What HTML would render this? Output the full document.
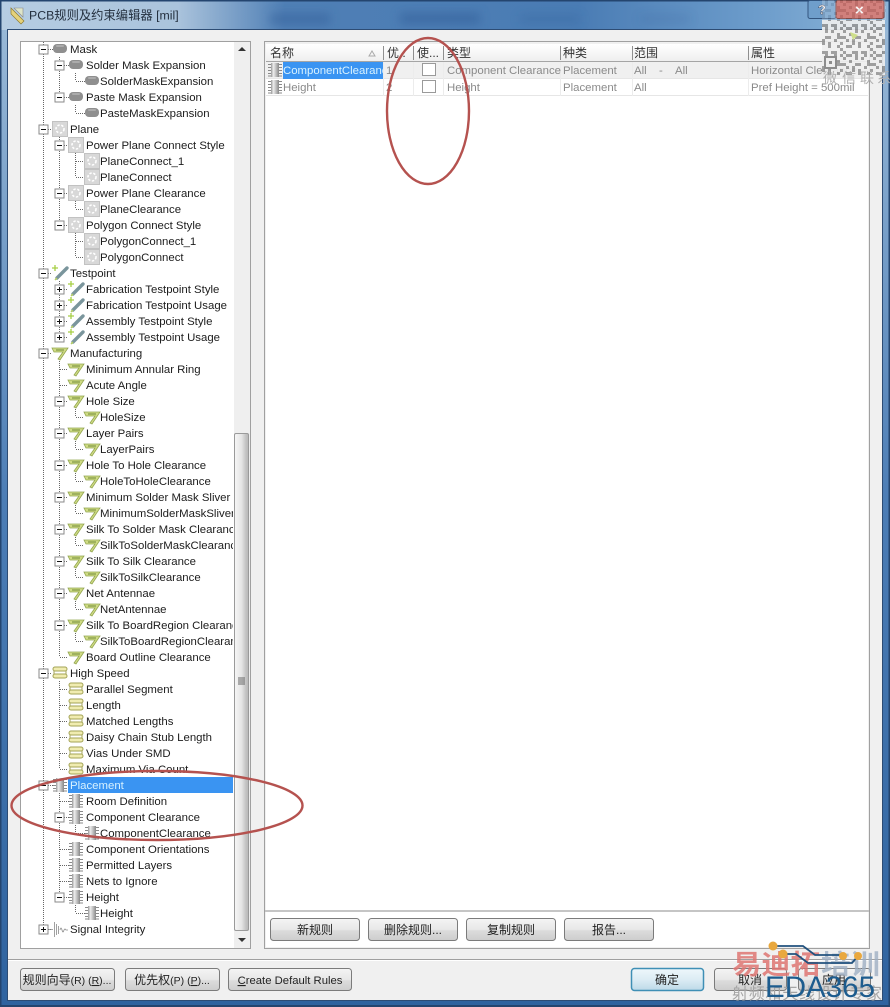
<!DOCTYPE html>
<html><head><meta charset="utf-8"><title>PCB规则及约束编辑器 [mil]</title>
<style>
html,body{margin:0;padding:0;background:#fff}
svg{display:block}
text{font-family:"Liberation Sans","Noto Sans CJK SC",sans-serif;font-size:11.4px;fill:#1c1c1c}
.t text{font-size:11.4px}
.g text{fill:#8a8a8a;font-size:11.4px}
.h text{font-size:12px;fill:#333}
.b text{font-size:12px;fill:#222;text-anchor:middle}
.btn{fill:url(#bg);stroke:#7b7b7b;stroke-width:1}
.dot{stroke:#666;stroke-width:1;stroke-dasharray:1 1;fill:none}
</style></head><body>
<svg width="890" height="1007" viewBox="0 0 890 1007" xmlns="http://www.w3.org/2000/svg">
<defs>
<linearGradient id="tb" x1="0" x2="1" y1="0" y2="0"><stop offset="0" stop-color="#b6cde2"/><stop offset=".2" stop-color="#aac3dc"/><stop offset=".32" stop-color="#4f7fb5"/><stop offset=".65" stop-color="#4a7cb4"/><stop offset=".85" stop-color="#6c9ccb"/><stop offset="1" stop-color="#8db5d8"/></linearGradient>
<linearGradient id="fr" x1="0" x2="0" y1="0" y2="1"><stop offset="0" stop-color="#9dbcd9"/><stop offset=".5" stop-color="#4c7db5"/><stop offset="1" stop-color="#2f639f"/></linearGradient>
<linearGradient id="bg" x1="0" x2="0" y1="0" y2="1"><stop offset="0" stop-color="#f4f4f4"/><stop offset=".5" stop-color="#e8e8e8"/><stop offset=".55" stop-color="#dcdcdc"/><stop offset="1" stop-color="#cdcdcd"/></linearGradient>
<linearGradient id="bd" x1="0" x2="0" y1="0" y2="1"><stop offset="0" stop-color="#eef7fb"/><stop offset=".5" stop-color="#dcecf4"/><stop offset="1" stop-color="#bcd9e8"/></linearGradient>
<linearGradient id="hd" x1="0" x2="0" y1="0" y2="1"><stop offset="0" stop-color="#fff"/><stop offset="1" stop-color="#efefef"/></linearGradient>
<linearGradient id="th" x1="0" x2="1" y1="0" y2="0"><stop offset="0" stop-color="#f6f6f6"/><stop offset=".5" stop-color="#e6e6e6"/><stop offset=".8" stop-color="#c4c4c4"/><stop offset="1" stop-color="#b8b8b8"/></linearGradient>
<linearGradient id="ch" x1="0" x2="1" y1="0" y2="0"><stop offset="0" stop-color="#999"/><stop offset=".3" stop-color="#eee"/><stop offset=".65" stop-color="#bbb"/><stop offset="1" stop-color="#888"/></linearGradient>
<filter id="bl" x="-30%" y="-80%" width="160%" height="260%"><feGaussianBlur stdDeviation="5"/></filter>
<pattern id="qr" width="30" height="27" patternUnits="userSpaceOnUse">
<rect width="30" height="27" fill="#efefef"/>
<path fill="#969696" d="M0 0h3v3H0zM6 0h6v3H6zM15 0h3v6h-3zM24 0h3v3h-3zM3 3h3v3H3zM21 3h3v3h-3zM9 6h3v3H9zM27 6h3v6h-3zM0 9h6v3H0zM15 9h6v3h-6zM6 12h3v3H6zM12 12h3v6h-3zM24 12h3v3h-3zM0 15h3v3H0zM18 15h3v6h-3zM27 18h3v3h-3zM6 18h6v3H6zM0 21h3v3H0zM12 24h6v3h-6zM21 24h6v3h-6zM3 24h3v3H3z"/>
</pattern>
<g id="mk"><rect x="-7" y="-5" width="14" height="9" rx="4" fill="#8f8f8f"/><rect x="-4" y="-4" width="8" height="2" rx="1" fill="#ababab"/></g>
<g id="pl"><rect x="-7.500" y="-7.500" width="15" height="15" fill="#d8d8d8" stroke="#c2c2c2"/><circle r="4" fill="none" stroke="#fff" stroke-width="1.600" stroke-dasharray="2.400 1.600"/></g>
<g id="tp"><path d="M-3 5 L7 -5" stroke="#7a959c" stroke-width="3.400" stroke-linecap="round"/><path d="M-5 7 L-3 5" stroke="#b7d060" stroke-width="1.500"/><path d="M-8 -5 h6 M-5 -8 v6" stroke="#a6cf45" stroke-width="1.300"/></g>
<g id="mf"><path d="M-8 -5 H8 L0 7 L-2 6 L3 -1 H-6 Z" fill="#cfdb84" stroke="#93a650" stroke-width=".8"/><path d="M-4 -3 H4" stroke="#6f8a38"/></g>
<g id="hs"><rect x="-7" y="-6" width="14" height="4" rx="2" fill="#f0ecb0" stroke="#a3a356"/><rect x="-7" y="1" width="14" height="4" rx="2" fill="#f0ecb0" stroke="#a3a356"/><path d="M-6 -2 L-6 1M6 -2L6 1" stroke="#a3a356"/></g>
<g id="pc"><rect x="-4" y="-7" width="8" height="14" fill="url(#ch)"/><path d="M-7 -5.500h3M-7 -2.500h3M-7 .5h3M-7 3.500h3M-7 6h3M4 -5.500h3M4 -2.500h3M4 .5h3M4 3.500h3M4 6h3" stroke="#8a8a8a"/></g>
<g id="mi"><rect x="-4.500" y="-4.500" width="9" height="9" fill="#fff" stroke="#8a8a8a"/><path d="M-2.500 0h5" stroke="#111"/></g>
<g id="pp"><rect x="-4.500" y="-4.500" width="9" height="9" fill="#fff" stroke="#8a8a8a"/><path d="M-2.500 0h5M0 -2.500v5" stroke="#111"/></g>
<clipPath id="ct"><rect x="22" y="42" width="211" height="905"/></clipPath>
<clipPath id="cn"><rect x="283" y="62" width="100" height="34"/></clipPath>
<clipPath id="cm"><rect x="822" y="20" width="63" height="55"/></clipPath>
</defs>

<!-- frame -->
<rect width="890" height="1007" fill="url(#fr)"/>
<rect x="0" y="0" width="890" height="30" fill="url(#tb)"/>
<rect x="0" y="0" width="890" height="1.500" fill="#24456f"/>
<rect x="0" y="0" width="1.500" height="1007" fill="#24456f"/>
<rect x="888.500" y="0" width="1.500" height="1007" fill="#24456f"/>
<rect x="0" y="1005" width="890" height="2" fill="#24456f"/>
<g filter="url(#bl)" fill="#2f5a94" opacity=".5"><rect x="270" y="14" width="60" height="10"/><rect x="400" y="13" width="80" height="11"/><rect x="520" y="15" width="60" height="8" opacity=".6"/><rect x="640" y="16" width="50" height="6" opacity=".5"/></g>
<!-- title -->
<path d="M11 8 L24 21 L21 24 L11 14 Z" fill="#e5d27a" stroke="#8d7a30" stroke-width=".7"/><path d="M14 8 h9 v9 Z" fill="#dfe5c8" stroke="#888" stroke-width=".6"/>
<text x="29" y="19.500" style="font-size:12.300px;fill:#24303f">PCB规则及约束编辑器 [mil]</text>
<!-- help/close -->
<rect x="808" y="0.500" width="28" height="18" rx="2" fill="#6f9ecb" stroke="#33557f"/>
<rect x="836" y="0.500" width="48" height="18" rx="2" fill="#c8615c" stroke="#7b3431"/>
<text x="818" y="14" style="font-size:13px;font-weight:bold;fill:#fff;stroke:#334;stroke-width:.4">?</text>
<text x="855" y="15" style="font-size:15px;font-weight:bold;fill:#fff">×</text>
<!-- client -->
<rect x="7.500" y="29.500" width="875" height="971" fill="#f0f0f0" stroke="#2d4c74"/>
<!-- left panel -->
<rect x="20.500" y="41.500" width="230" height="907" fill="#fff" stroke="#a0a0a0"/>
<rect x="234" y="42" width="16" height="906" fill="#efefef"/>
<rect x="234.500" y="433.500" width="14" height="497" rx="1.500" fill="url(#th)" stroke="#9a9a9a"/>
<path d="M238 51 l4 -4 l4 4z" fill="#333"/><path d="M238 938 l4 4 l4 -4z" fill="#333"/>
<path d="M238 678h7M238 680h7M238 682h7M238 684h7" stroke="#666"/>
<!-- selected -->
<rect x="68" y="777" width="165" height="16" fill="#3a94f2"/>
<!-- tree lines -->
<g class="dot">
<path d="M43.500 42V925"/>
<path d="M59.500 57V97M59.500 137V225M59.500 281V337M59.500 361V657M59.500 681V769M59.500 793V897"/>
<path d="M75.500 73V81M75.500 105V113M75.500 153V177M75.500 201V209M75.500 233V257M75.500 409V417M75.500 441V449M75.500 473V481M75.500 505V513M75.500 537V545M75.500 569V577M75.500 601V609M75.500 633V641M75.500 825V833M75.500 905V913"/>
<path d="M48 49.500h5M48 129.500h4M48 273.500h4M48 353.500h4M48 673.500h4M48 785.500h5M48 929.500h4"/>
<path d="M64 65.500h5M64 97.500h5M64 145.500h4M64 193.500h4M64 225.500h4M64 289.500h4M64 305.500h4M64 321.500h4M64 337.500h4M60 369.500h8M60 385.500h8M64 401.500h4M64 433.500h4M64 465.500h4M64 497.500h4M64 529.500h4M64 561.500h4M64 593.500h4M64 625.500h4M60 657.500h8M60 689.500h8M60 705.500h8M60 721.500h8M60 737.500h8M60 753.500h8M60 769.500h8M60 801.500h9M64 817.500h5M60 849.500h9M60 865.500h9M60 881.500h9M64 897.500h5"/>
<path d="M76 81.500h9M76 113.500h9M76 161.500h8M76 177.500h8M76 209.500h8M76 241.500h8M76 257.500h8M76 417.500h8M76 449.500h8M76 481.500h8M76 513.500h8M76 545.500h8M76 577.500h8M76 609.500h8M76 641.500h8M76 833.500h9M76 913.500h9"/>
</g>
<!-- expanders -->
<use href="#mi" x="43.500" y="49.500"/><use href="#mi" x="43.500" y="129.500"/><use href="#mi" x="43.500" y="273.500"/><use href="#mi" x="43.500" y="353.500"/><use href="#mi" x="43.500" y="673.500"/><use href="#mi" x="43.500" y="785.500"/><use href="#pp" x="43.500" y="929.500"/>
<use href="#mi" x="59.500" y="65.500"/><use href="#mi" x="59.500" y="97.500"/><use href="#mi" x="59.500" y="145.500"/><use href="#mi" x="59.500" y="193.500"/><use href="#mi" x="59.500" y="225.500"/>
<use href="#pp" x="59.500" y="289.500"/><use href="#pp" x="59.500" y="305.500"/><use href="#pp" x="59.500" y="321.500"/><use href="#pp" x="59.500" y="337.500"/>
<use href="#mi" x="59.500" y="401.500"/><use href="#mi" x="59.500" y="433.500"/><use href="#mi" x="59.500" y="465.500"/><use href="#mi" x="59.500" y="497.500"/><use href="#mi" x="59.500" y="529.500"/><use href="#mi" x="59.500" y="561.500"/><use href="#mi" x="59.500" y="593.500"/><use href="#mi" x="59.500" y="625.500"/>
<use href="#mi" x="59.500" y="817.500"/><use href="#mi" x="59.500" y="897.500"/>
<!-- icons -->
<use href="#mk" x="60" y="49"/><use href="#mk" x="76" y="65"/><use href="#mk" x="92" y="81"/><use href="#mk" x="76" y="97"/><use href="#mk" x="92" y="113"/>
<use href="#pl" x="60" y="129"/><use href="#pl" x="76" y="145"/><use href="#pl" x="92" y="161"/><use href="#pl" x="92" y="177"/><use href="#pl" x="76" y="193"/><use href="#pl" x="92" y="209"/><use href="#pl" x="76" y="225"/><use href="#pl" x="92" y="241"/><use href="#pl" x="92" y="257"/>
<use href="#tp" x="60" y="273"/><use href="#tp" x="76" y="289"/><use href="#tp" x="76" y="305"/><use href="#tp" x="76" y="321"/><use href="#tp" x="76" y="337"/>
<use href="#mf" x="60" y="353"/><use href="#mf" x="76" y="369"/><use href="#mf" x="76" y="385"/><use href="#mf" x="76" y="401"/><use href="#mf" x="92" y="417"/><use href="#mf" x="76" y="433"/><use href="#mf" x="92" y="449"/><use href="#mf" x="76" y="465"/><use href="#mf" x="92" y="481"/><use href="#mf" x="76" y="497"/><use href="#mf" x="92" y="513"/><use href="#mf" x="76" y="529"/><use href="#mf" x="92" y="545"/><use href="#mf" x="76" y="561"/><use href="#mf" x="92" y="577"/><use href="#mf" x="76" y="593"/><use href="#mf" x="92" y="609"/><use href="#mf" x="76" y="625"/><use href="#mf" x="92" y="641"/><use href="#mf" x="76" y="657"/>
<use href="#hs" x="60" y="673"/><use href="#hs" x="76" y="689"/><use href="#hs" x="76" y="705"/><use href="#hs" x="76" y="721"/><use href="#hs" x="76" y="737"/><use href="#hs" x="76" y="753"/><use href="#hs" x="76" y="769"/>
<use href="#pc" x="60" y="785"/><use href="#pc" x="76" y="801"/><use href="#pc" x="76" y="817"/><use href="#pc" x="92" y="833"/><use href="#pc" x="76" y="849"/><use href="#pc" x="76" y="865"/><use href="#pc" x="76" y="881"/><use href="#pc" x="76" y="897"/><use href="#pc" x="92" y="913"/>
<path d="M49 929.500h4M54.500 922v15M56.500 924v11M58.500 926v8M60 930q1 -4 2 0t2 0q1 -2 2 0h2" stroke="#8a8a8a" stroke-width=".8" fill="none"/>
<!-- tree text -->
<g class="t" clip-path="url(#ct)">
<text x="70" y="53">Mask</text>
<text x="86" y="69">Solder Mask Expansion</text>
<text x="100" y="85">SolderMaskExpansion</text>
<text x="86" y="101">Paste Mask Expansion</text>
<text x="100" y="117">PasteMaskExpansion</text>
<text x="70" y="133">Plane</text>
<text x="86" y="149">Power Plane Connect Style</text>
<text x="100" y="165">PlaneConnect_1</text>
<text x="100" y="181">PlaneConnect</text>
<text x="86" y="197">Power Plane Clearance</text>
<text x="100" y="213">PlaneClearance</text>
<text x="86" y="229">Polygon Connect Style</text>
<text x="100" y="245">PolygonConnect_1</text>
<text x="100" y="261">PolygonConnect</text>
<text x="70" y="277">Testpoint</text>
<text x="86" y="293">Fabrication Testpoint Style</text>
<text x="86" y="309">Fabrication Testpoint Usage</text>
<text x="86" y="325">Assembly Testpoint Style</text>
<text x="86" y="341">Assembly Testpoint Usage</text>
<text x="70" y="357">Manufacturing</text>
<text x="86" y="373">Minimum Annular Ring</text>
<text x="86" y="389">Acute Angle</text>
<text x="86" y="405">Hole Size</text>
<text x="100" y="421">HoleSize</text>
<text x="86" y="437">Layer Pairs</text>
<text x="100" y="453">LayerPairs</text>
<text x="86" y="469">Hole To Hole Clearance</text>
<text x="100" y="485">HoleToHoleClearance</text>
<text x="86" y="501">Minimum Solder Mask Sliver</text>
<text x="100" y="517">MinimumSolderMaskSliver</text>
<text x="86" y="533">Silk To Solder Mask Clearance</text>
<text x="100" y="549">SilkToSolderMaskClearance</text>
<text x="86" y="565">Silk To Silk Clearance</text>
<text x="100" y="581">SilkToSilkClearance</text>
<text x="86" y="597">Net Antennae</text>
<text x="100" y="613">NetAntennae</text>
<text x="86" y="629">Silk To BoardRegion Clearance</text>
<text x="100" y="645">SilkToBoardRegionClearance</text>
<text x="86" y="661">Board Outline Clearance</text>
<text x="70" y="677">High Speed</text>
<text x="86" y="693">Parallel Segment</text>
<text x="86" y="709">Length</text>
<text x="86" y="725">Matched Lengths</text>
<text x="86" y="741">Daisy Chain Stub Length</text>
<text x="86" y="757">Vias Under SMD</text>
<text x="86" y="773">Maximum Via Count</text>
<text x="70" y="789" style="fill:#d8f2ff">Placement</text>
<text x="86" y="805">Room Definition</text>
<text x="86" y="821">Component Clearance</text>
<text x="100" y="837">ComponentClearance</text>
<text x="86" y="853">Component Orientations</text>
<text x="86" y="869">Permitted Layers</text>
<text x="86" y="885">Nets to Ignore</text>
<text x="86" y="901">Height</text>
<text x="100" y="917">Height</text>
<text x="70" y="933">Signal Integrity</text>
</g>

<!-- right panel -->
<rect x="264.500" y="41.500" width="605" height="907" fill="#f0f0f0" stroke="#a0a0a0"/>
<rect x="266" y="44" width="602" height="866" fill="#fff"/>
<rect x="266" y="44" width="602" height="17" fill="url(#hd)"/>
<path d="M266 61.500H868" stroke="#a5a5a5"/>
<path d="M383.500 46v14M413.500 46v14M443.500 46v14M560.500 46v14M632.500 46v14M748.500 46v14" stroke="#8f8f8f"/>
<g class="h"><text x="270" y="57">名称</text><text x="387" y="57">优..</text><text x="417" y="57">使...</text><text x="447" y="57">类型</text><text x="563" y="57">种类</text><text x="634" y="57">范围</text><text x="751" y="57">属性</text></g>
<path d="M369 56l3 -5l3 5z" fill="none" stroke="#aaa"/>
<rect x="266" y="62" width="602" height="17" fill="#f0f0f0"/>
<path d="M266 78.500H868M266 95.500H868" stroke="#e6e6e6"/>
<path d="M383.500 62v34M413.500 62v34M443.500 62v34M560.500 62v34M632.500 62v34M748.500 62v34" stroke="#ececec"/>
<rect x="283" y="62" width="100" height="17" fill="#3a94f2"/>
<use href="#pc" x="275" y="70"/><use href="#pc" x="275" y="87"/>
<text x="283" y="74" clip-path="url(#cn)" style="fill:#d8f2ff">ComponentClearance</text>
<rect x="422.500" y="63.500" width="13" height="12" fill="#fff" stroke="#9a9a9a"/>
<rect x="422.500" y="80.500" width="13" height="12" fill="#fff" stroke="#9a9a9a"/>
<g class="g">
<text x="386" y="74">1</text><text x="386" y="91">2</text>
<text x="447" y="74">Component Clearance</text><text x="563" y="74">Placement</text><text x="634" y="74">All</text><text x="659" y="74">-</text><text x="675" y="74">All</text><text x="751" y="74">Horizontal Clearance</text>
<text x="283" y="91">Height</text><text x="447" y="91">Height</text><text x="563" y="91">Placement</text><text x="634" y="91">All</text><text x="751" y="91">Pref Height = 500mil</text>
</g>
<rect x="264.500" y="910.500" width="605" height="1" fill="#9a9a9a"/>
<rect x="266" y="912" width="602" height="35" fill="#fff"/>
<g class="b">
<rect class="btn" x="270.500" y="918.500" width="89" height="22" rx="3"/><text x="315" y="934">新规则</text>
<rect class="btn" x="368.500" y="918.500" width="89" height="22" rx="3"/><text x="413" y="934">删除规则...</text>
<rect class="btn" x="466.500" y="918.500" width="89" height="22" rx="3"/><text x="511" y="934">复制规则</text>
<rect class="btn" x="564.500" y="918.500" width="89" height="22" rx="3"/><text x="609" y="934">报告...</text>
</g>
<!-- bottom bar -->
<path d="M8 959.500H882" stroke="#a0a0a0"/><path d="M8 960.500H882" stroke="#fff"/>
<g class="b">
<rect class="btn" x="20.500" y="968.500" width="94" height="22" rx="3"/><text x="67" y="984">规则向导<tspan style="font-size:10.500px">(R) (<tspan text-decoration="underline">R</tspan>)...</tspan></text>
<rect class="btn" x="125.500" y="968.500" width="94" height="22" rx="3"/><text x="172" y="984">优先权<tspan style="font-size:10.500px">(P) (<tspan text-decoration="underline">P</tspan>)...</tspan></text>
<rect class="btn" x="228.500" y="968.500" width="123" height="22" rx="3"/><text x="290" y="984" style="font-size:11.300px"><tspan text-decoration="underline">C</tspan>reate Default Rules</text>
<rect x="631.500" y="968.500" width="72" height="22" rx="3" fill="url(#bd)" stroke="#3f8fb5" stroke-width="1.500"/><text x="667" y="984">确定</text>
<rect class="btn" x="714.500" y="968.500" width="72" height="22" rx="3"/><text x="750" y="984">取消</text>
<rect class="btn" x="798.500" y="968.500" width="72" height="22" rx="3"/><text x="834" y="984">应用</text>
</g>
<!-- annotations -->
<ellipse cx="428" cy="111" rx="41" ry="73" fill="none" stroke="#b5524f" stroke-width="2.400"/>
<ellipse cx="157" cy="805.500" rx="145.500" ry="34.500" fill="none" stroke="#b5524f" stroke-width="2.400"/>
<!-- QR watermark -->
<g clip-path="url(#cm)"><rect x="822" y="20" width="63" height="55" fill="url(#qr)" opacity=".9"/>
<rect x="825" y="57" width="11" height="11" fill="#efefef" stroke="#8d8d8d" stroke-width="2"/><rect x="829" y="61" width="3" height="3" fill="#8d8d8d"/>
<path d="M850 32l8 3l-5 5z" fill="#cfe08a"/></g>
<rect x="822" y="0" width="64" height="20" fill="url(#qr)" opacity=".22"/>
<text x="823 842 860 877" y="83" style="font-size:14px;fill:#b0b0b0">微信联系</text>
<!-- EDA365 watermark -->
<text x="732" y="974" textLength="88" lengthAdjust="spacingAndGlyphs" style="font-size:27px;font-weight:bold;fill:#df7673;opacity:.85">易迪拓</text>
<text x="821" y="974" textLength="59" lengthAdjust="spacingAndGlyphs" style="font-size:27px;font-weight:bold;fill:#9fb0c4;opacity:.8">培训</text>
<text x="732" y="999" textLength="150" style="font-size:16px;fill:#a5a5a5">射频和天线设计专家</text>
<text x="765" y="997" textLength="110" lengthAdjust="spacingAndGlyphs" style="font-size:30px;fill:#1d5c8e">EDA365</text>
<path d="M773 946H803L815 955H845M783 954H796L808 963H852L858 956" fill="none" stroke="#22527e" stroke-width="1.800"/>
<g fill="#e9a83e"><circle cx="773" cy="946" r="4.500"/><circle cx="783" cy="954" r="4.500"/><circle cx="843" cy="956" r="4"/><circle cx="858" cy="956" r="4"/></g>
</svg>
</body></html>
